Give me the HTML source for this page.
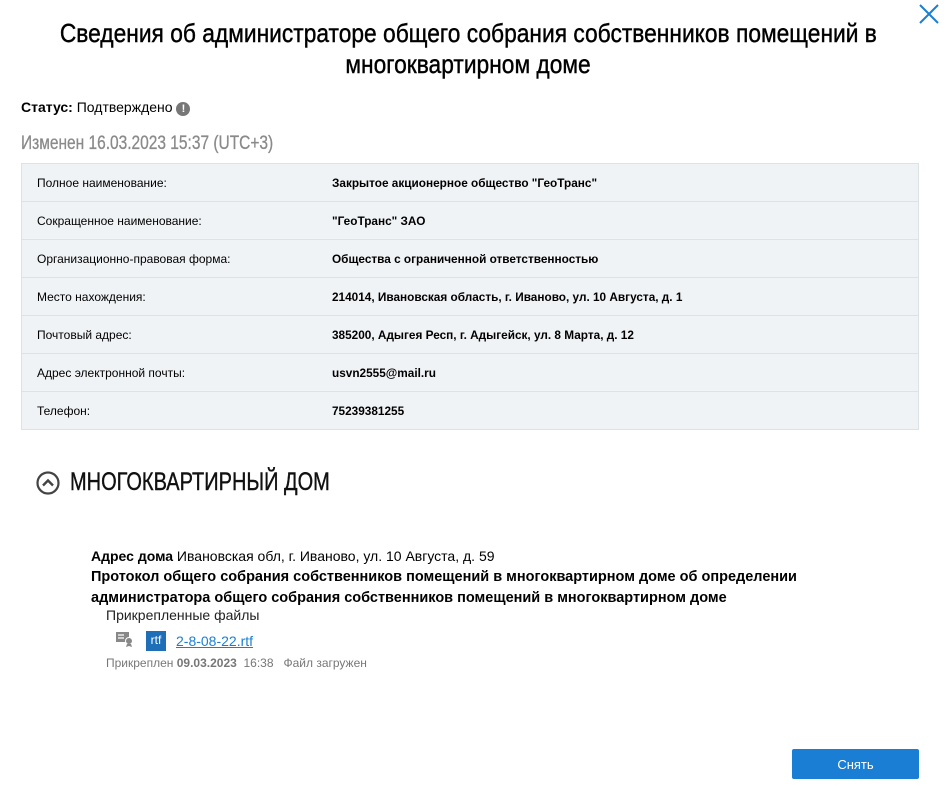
<!DOCTYPE html>
<html><head><meta charset="utf-8"><style>
body{margin:0;width:944px;height:788px;background:#fff;font-family:"Liberation Sans",Arial,sans-serif;color:#000;position:relative;overflow:hidden}
.cond{display:inline-block;transform-origin:left top;white-space:nowrap}
.abs{position:absolute}
table{border-collapse:collapse;position:absolute;left:21px;top:163px;width:898px;font-size:12px;background:#f0f3f6}
td{height:37px;border-top:1px solid #dde2e7;border-bottom:1px solid #dde2e7;padding:0 0 0 15px}
tr td:first-child{border-left:1px solid #dde2e7}
tr td:last-child{border-right:1px solid #dde2e7}
td.v{font-weight:bold;padding-left:0;font-size:11.8px}
</style></head><body>
<svg class="abs" style="left:918px;top:3px" width="22" height="22" viewBox="0 0 22 22"><path d="M2 2L20 20M20 2L2 20" stroke="#1a7fd4" stroke-width="2"/></svg>
<div class="abs" style="left:-4px;width:944px;top:18px;text-align:center;font-size:26px;line-height:31px;-webkit-text-stroke:0.4px #000">
<span style="display:inline-block;transform:scaleX(0.876)">Сведения об администраторе общего собрания собственников помещений в</span><br>
<span style="display:inline-block;transform:scaleX(0.876)">многоквартирном доме</span></div>
<div class="abs" style="left:21px;top:99px;font-size:14px"><b>Статус:</b> Подтверждено <span style="display:inline-block;width:14px;height:14px;border-radius:50%;background:#777;color:#fff;font-size:11px;font-weight:bold;text-align:center;line-height:14px;vertical-align:0px">!</span></div>
<div class="abs" style="left:21px;top:133px;font-size:19px;color:#8a8a8a;-webkit-text-stroke:0.3px #8a8a8a"><span class="cond" style="transform:scaleX(0.815)">Изменен 16.03.2023 15:37 (UTC+3)</span></div>
<table>
<tr><td style="width:295px">Полное наименование:</td><td class="v">Закрытое акционерное общество "ГеоТранс"</td></tr>
<tr><td>Сокращенное наименование:</td><td class="v">"ГеоТранс" ЗАО</td></tr>
<tr><td>Организационно-правовая форма:</td><td class="v">Общества с ограниченной ответственностью</td></tr>
<tr><td>Место нахождения:</td><td class="v">214014, Ивановская область, г. Иваново, ул. 10 Августа, д. 1</td></tr>
<tr><td>Почтовый адрес:</td><td class="v">385200, Адыгея Респ, г. Адыгейск, ул. 8 Марта, д. 12</td></tr>
<tr><td>Адрес электронной почты:</td><td class="v">usvn2555@mail.ru</td></tr>
<tr><td>Телефон:</td><td class="v">75239381255</td></tr>
</table>
<svg class="abs" style="left:36px;top:471px" width="24" height="24" viewBox="0 0 24 24"><circle cx="12" cy="12" r="10.5" fill="none" stroke="#444" stroke-width="2.2"/><path d="M7 14.5L12 9.5L17 14.5" fill="none" stroke="#444" stroke-width="2.4"/></svg>
<div class="abs" style="left:70px;top:468px;font-size:25px;color:#111;-webkit-text-stroke:0.4px #111"><span class="cond" style="transform:scaleX(0.80)">МНОГОКВАРТИРНЫЙ ДОМ</span></div>
<div class="abs" style="left:91px;top:546px;font-size:14px;line-height:20px">
<span style="font-size:14px"><b>Адрес дома</b> Ивановская обл, г. Иваново, ул. 10 Августа, д. 59</span><br>
<b style="font-size:14.5px">Протокол общего собрания собственников помещений в многоквартирном доме об определении<br>администратора общего собрания собственников помещений в многоквартирном доме</b></div>
<div class="abs" style="left:106px;top:607px;font-size:14px;color:#222">Прикрепленные файлы</div>
<svg class="abs" style="left:116px;top:631px" width="18" height="16" viewBox="0 0 18 16"><rect x="0" y="1" width="13" height="10" fill="#888"/><path d="M2 4h6M2 7h6" stroke="#fff" stroke-width="1.3"/><circle cx="13" cy="10" r="3.5" fill="#888" stroke="#fff"/><path d="M11 13l-1 3 3-1 3 1-1-3" fill="#888"/></svg>
<div class="abs" style="left:146px;top:631px;width:20px;height:20px;background:#1e6fb8;color:#fff;font-size:12px;text-align:center;line-height:18px">rtf</div>
<div class="abs" style="left:176px;top:633px;font-size:14px;color:#1a7fd4;text-decoration:underline">2-8-08-22.rtf</div>
<div class="abs" style="left:106px;top:656px;font-size:12px;color:#777">Прикреплен <b>09.03.2023</b>&nbsp; 16:38 &nbsp; Файл загружен</div>
<div class="abs" style="left:792px;top:749px;width:127px;height:30px;background:#1a7fd4;border-radius:2px;color:#fff;font-size:13px;text-align:center;line-height:31px">Снять</div>
</body></html>
